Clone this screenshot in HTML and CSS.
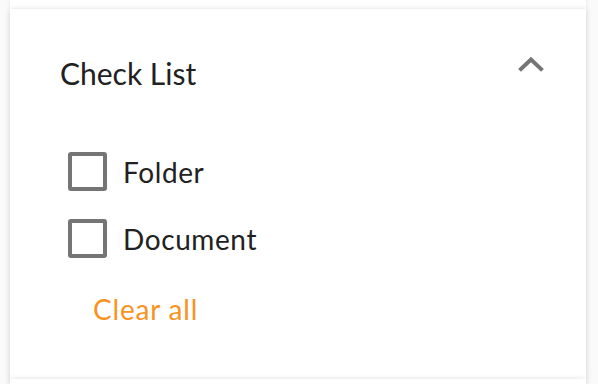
FILE: index.html
```html
<!DOCTYPE html>
<html lang="en">
<head>
    <meta charset="UTF-8">
    <meta name="viewport" content="width=device-width, initial-scale=1.0">
    <title>Check List</title>
    <link rel="stylesheet" href="styles.css">
</head>
<body>
    <div class="panel panel-prev"></div>
    <div class="panel">
        <div class="panel-header">
            <h2 class="panel-title">Check List</h2>
            <svg class="chevron" width="26" height="16" viewBox="0 0 26 16">
                <path d="M3 13 L13 3.5 L23 13" fill="none" stroke="#757575" stroke-width="4" stroke-linecap="square"/>
            </svg>
        </div>
        <div class="checklist">
            <label class="check-item">
                <span class="box"></span>
                <span class="check-label">Folder</span>
            </label>
            <label class="check-item">
                <span class="box"></span>
                <span class="check-label">Document</span>
            </label>
        </div>
        <a class="clear-all" href="#">Clear all</a>
    </div>
    <div class="panel panel-next"></div>
</body>
</html>
```

FILE: styles.css
```css
body {
    margin: 0;
    height: 384px;
    background: #fafafa;
    font-family: 'Lato', 'Open Sans', sans-serif;
    color: #212121;
    overflow: hidden;
}

.panel {
    background: #fff;
    margin: 0 12px 0 10px;
    box-shadow: 0 1px 6px rgba(0, 0, 0, 0.18);
    padding: 30px 42px 53px 50px;
}

.panel-prev {
    height: 40px;
    padding: 0;
    margin-top: -31px;
    box-shadow: 0 1px 4px rgba(0, 0, 0, 0.08);
}

.panel-next {
    height: 6px;
    padding: 0;
}

.panel-header {
    display: flex;
    justify-content: space-between;
    align-items: center;
    height: 68px;
}

.panel-title {
    margin: 0;
    font-size: 30px;
    font-weight: 400;
}

.chevron {
    display: block;
    margin-top: -18px;
}

.checklist {
    display: flex;
    flex-direction: column;
    gap: 28px;
    margin-top: 45px;
    padding-left: 8px;
}

.check-item {
    display: flex;
    align-items: center;
    gap: 16px;
    height: 39px;
}

.box {
    width: 31px;
    height: 31px;
    border: 4px solid #757575;
    border-radius: 3px;
}

.check-label {
    font-size: 28px;
    letter-spacing: 0.6px;
}

.clear-all {
    display: inline-block;
    margin-top: 34px;
    margin-left: 33px;
    color: #f7931e;
    font-size: 28px;
    letter-spacing: 0.8px;
    text-decoration: none;
}
```
